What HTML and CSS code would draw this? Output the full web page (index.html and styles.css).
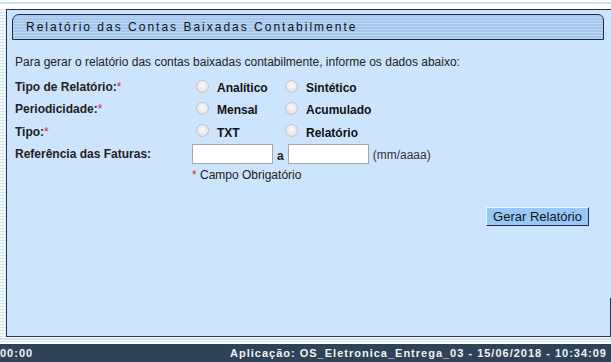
FILE: index.html
```html
<!DOCTYPE html>
<html lang="pt-BR">
<head>
    <meta charset="UTF-8">
    <title>Relatório das Contas Baixadas Contabilmente</title>
    <link rel="stylesheet" href="styles.css">
</head>
<body>
    <div class="stripe-top"></div>
    <div class="middle">
        <div class="stripe-left"></div>
        <div class="panel">
            <div class="panel-title">Relatório das Contas Baixadas Contabilmente</div>
            <p class="intro">Para gerar o relatório das contas baixadas contabilmente, informe os dados abaixo:</p>
            <div class="form-grid">
                <div class="label">Tipo de Relatório:<span class="req">*</span></div>
                <div class="options">
                    <label class="opt"><span class="radio"></span>Analítico</label>
                    <label class="opt"><span class="radio"></span>Sintético</label>
                </div>
                <div class="label">Periodicidade:<span class="req">*</span></div>
                <div class="options">
                    <label class="opt"><span class="radio"></span>Mensal</label>
                    <label class="opt"><span class="radio"></span>Acumulado</label>
                </div>
                <div class="label">Tipo:<span class="req">*</span></div>
                <div class="options">
                    <label class="opt"><span class="radio"></span>TXT</label>
                    <label class="opt"><span class="radio"></span>Relatório</label>
                </div>
                <div class="label">Referência das Faturas:</div>
                <div class="ref-inputs">
                    <input type="text" class="field">
                    <span class="sep">a</span>
                    <input type="text" class="field">
                    <span class="hint">(mm/aaaa)</span>
                </div>
                <div></div>
                <div class="required-note"><span class="req">*</span> Campo Obrigatório</div>
            </div>
            <div class="actions">
                <button class="btn">Gerar Relatório</button>
            </div>
        </div>
    </div>
    <div class="stripe-bottom"></div>
    <div class="footer">
        <span>00:00</span>
        <span>Aplicação: OS_Eletronica_Entrega_03 - 15/06/2018 - 10:34:09</span>
    </div>
</body>
</html>
```

FILE: styles.css
```css
body {
    margin: 0;
    width: 611px;
    height: 362px;
    overflow: hidden;
    font-family: "Liberation Sans", Arial, sans-serif;
    font-size: 12px;
    color: #222;
    background-color: #fff;
}

.stripe-top {
    height: 9px;
    background: linear-gradient(#fff 0, #fff 2px, #cfe0ee 2px, #cfe0ee 4px, #fff 4px);
}

.middle {
    display: flex;
    height: 328px;
}

.stripe-left {
    width: 6px;
    flex-shrink: 0;
    background: repeating-linear-gradient(#d3e4f2 0, #d3e4f2 1px, #f4f9fd 1px, #f4f9fd 3px);
}

.panel {
    flex: 1;
    background-color: #cce4fc;
    border: 1px solid #233549;
    border-right: none;
    position: relative;
}

.panel::after {
    content: "";
    position: absolute;
    right: 0;
    bottom: 0;
    width: 1px;
    height: 38px;
    background-color: #233549;
}

.panel-title {
    margin: 4px 0 0 5px;
    width: 577px;
    height: 24px;
    padding-left: 13px;
    line-height: 24px;
    border: 1px solid #1c2c44;
    border-radius: 7px 6px 0 0;
    background: repeating-linear-gradient(#a4c6ef 0, #a4c6ef 2px, #bcd6f4 2px, #bcd6f4 3px);
    color: #111;
    font-size: 12px;
    letter-spacing: 2px;
}

.intro {
    margin: 15px 0 0 8px;
    line-height: 14px;
}

.form-grid {
    display: grid;
    grid-template-columns: 177px auto;
    grid-template-rows: 22px 22px 23px 22px 20px;
    margin: 7px 0 0 8px;
    align-items: center;
}

.label {
    font-weight: bold;
    color: #222;
}

.req {
    color: #e0262a;
    font-weight: normal;
}

.options {
    display: flex;
    padding-left: 4px;
}

.opt {
    display: flex;
    align-items: center;
    width: 89px;
    font-weight: bold;
    color: #111;
    padding-top: 2px;
}

.radio {
    width: 11px;
    height: 11px;
    border: 1px solid #c4c4c4;
    border-radius: 50%;
    background: radial-gradient(circle at 50% 40%, #fbfbfb 0, #e9e9e9 55%, #d4d4d4 100%);
    margin-right: 8px;
    margin-top: -4px;
}

.ref-inputs {
    display: flex;
    align-items: center;
}

.field {
    width: 81px;
    height: 20px;
    box-sizing: border-box;
    margin: 0;
    border: 1px solid #a6a6a6;
    background: #fff;
}

.sep {
    font-weight: bold;
    margin: 4px 4px 0 4px;
}

.hint {
    margin: 2px 0 0 4px;
    color: #333;
}

.required-note {
    color: #222;
}

.actions {
    display: flex;
    justify-content: flex-end;
    margin: 22px 22px 0 0;
}

.btn {
    width: 103px;
    height: 19px;
    padding: 0;
    font-family: "Liberation Sans", Arial, sans-serif;
    font-size: 13px;
    color: #111;
    background-color: #99c8f8;
    border: 1px solid;
    border-color: #eef6ff #1a2a66 #1a2a66 #eef6ff;
}

.stripe-bottom {
    height: 7px;
    background: linear-gradient(#fff 0, #fff 1px, #cfe0ee 1px, #cfe0ee 3px, #fff 3px, #fff 4px, #cfe0ee 4px, #cfe0ee 5px, #fff 5px);
}

.footer {
    height: 18px;
    background-color: #2e4358;
    color: #f2f2f2;
    font-weight: bold;
    font-size: 11px;
    letter-spacing: 1px;
    display: flex;
    justify-content: space-between;
    align-items: center;
    padding-right: 4px;
}
```
